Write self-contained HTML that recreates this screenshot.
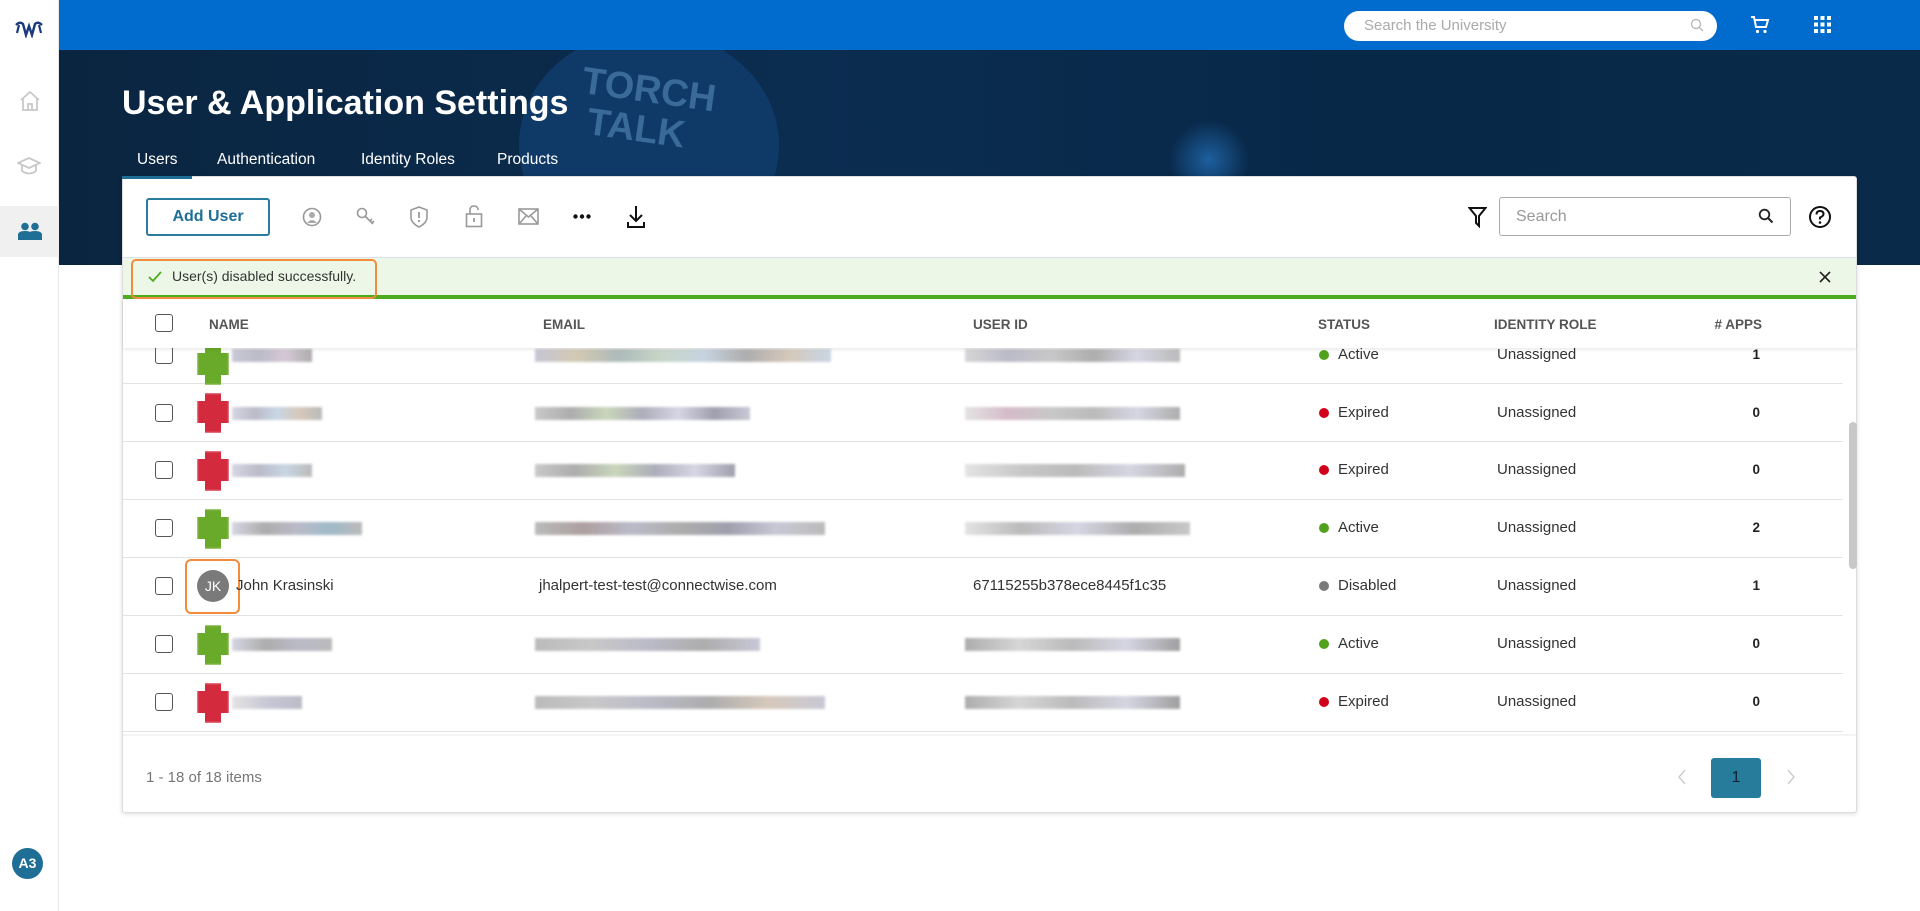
<!DOCTYPE html>
<html><head><meta charset="utf-8"><style>
*{box-sizing:border-box;margin:0;padding:0}
body{width:1920px;height:911px;overflow:hidden;background:#fff;font-family:"Liberation Sans",Arial,sans-serif;position:relative;color:#222}
.a{position:absolute}
.side{left:0;top:0;width:59px;height:911px;background:#fff;border-right:1px solid #e6e6e6;z-index:5}
.top{left:59px;top:0;right:0;height:50px;background:#016bce}
.ban{left:59px;top:50px;right:0;height:215px;background:radial-gradient(circle 40px at 1150px 110px,#1d5f9e,transparent),linear-gradient(90deg,#0a2540,#0b2d50 40%,#082848 70%,#0a2a4a);overflow:hidden}
.tab{top:151px;color:#fff;font-size:15.5px}
.card{left:122px;top:176px;width:1735px;height:637px;background:#fff;border:1px solid #ddd;border-radius:3px;box-shadow:0 1px 4px rgba(0,0,0,.15)}
.hd{font-size:13.5px;font-weight:bold;color:#555;top:317px}
.cb{width:18px;height:18px;border:1.5px solid #555;border-radius:3px;background:#fff;left:155px}
.sep{left:123px;width:1720px;height:1px;background:#e2e2e2}
.txt{font-size:15px;color:#333}
.dot{width:10px;height:10px;border-radius:50%}
.blur{height:13px;filter:blur(1.2px);opacity:.8}
.num{font-size:13.5px;font-weight:bold;color:#222;left:1740px;width:20px;text-align:right}
.ic{stroke:#999;fill:none;stroke-width:1.6}
</style></head><body>
<div class="a side">
 <svg class="a" style="left:14px;top:20px" width="30" height="18" viewBox="0 0 30 18"><path d="M2 5 Q6 1 9 4 L12 15 L15 6 L18 15 L21 4 Q24 1 28 5" fill="none" stroke="#1a3a7a" stroke-width="2.4"/><path d="M5 5 L3 13 M25 5 L27 13" stroke="#1a3a7a" stroke-width="2.2"/></svg>
 <svg class="a" style="left:19px;top:90px" width="22" height="22" viewBox="0 0 22 22"><path d="M2 10 L11 2 L20 10 M4 8 V20 H18 V8 M9 20 V14 H13 V20" fill="none" stroke="#c8c8c8" stroke-width="1.8"/></svg>
 <svg class="a" style="left:17px;top:156px" width="24" height="20" viewBox="0 0 24 20"><path d="M1 7 L12 2 L23 7 L12 12 Z M5 9 V15 Q12 20 19 15 V9" fill="none" stroke="#c8c8c8" stroke-width="1.8"/></svg>
 <div class="a" style="left:0;top:206px;width:59px;height:51px;background:#f0f0f0"></div>
 <svg class="a" style="left:18px;top:222px" width="24" height="18" viewBox="0 0 24 18"><circle cx="7" cy="4.5" r="3.8" fill="#1f6e96"/><circle cx="17" cy="4.5" r="3.8" fill="#1f6e96"/><path d="M0 18 V13 Q0 9 7 9 Q14 9 14 13 V18Z M10 18 V13 Q10 9 17 9 Q24 9 24 13 V18Z" fill="#1f6e96"/></svg>
 <div class="a" style="left:12px;top:848px;width:31px;height:31px;border-radius:50%;background:#1f6e96;color:#fff;font-size:14px;font-weight:bold;line-height:31px;text-align:center">A3</div>
</div>
<div class="a top"></div>
<div class="a" style="left:1344px;top:11px;width:373px;height:30px;background:#fff;border-radius:15px"></div>
<div class="a" style="left:1364px;top:17px;font-size:15px;color:#aaa">Search the University</div>
<svg class="a" style="left:1690px;top:18px" width="14" height="14" viewBox="0 0 14 14"><circle cx="6" cy="6" r="4.5" fill="none" stroke="#bbb" stroke-width="1.4"/><path d="M9.5 9.5 L13 13" stroke="#bbb" stroke-width="1.4"/></svg>
<svg class="a" style="left:1750px;top:15px" width="20" height="20" viewBox="0 0 20 20"><path d="M1 2 H4 L6 12 H16 L18 5 H5" fill="none" stroke="#fff" stroke-width="2"/><circle cx="7.5" cy="16.5" r="1.6" fill="#fff"/><circle cx="15" cy="16.5" r="1.6" fill="#fff"/></svg>
<svg class="a" style="left:1814px;top:16px" width="17" height="17" viewBox="0 0 17 17" fill="#fff"><rect x="0" y="0" width="4" height="4"/><rect x="6.5" y="0" width="4" height="4"/><rect x="13" y="0" width="4" height="4"/><rect x="0" y="6.5" width="4" height="4"/><rect x="6.5" y="6.5" width="4" height="4"/><rect x="13" y="6.5" width="4" height="4"/><rect x="0" y="13" width="4" height="4"/><rect x="6.5" y="13" width="4" height="4"/><rect x="13" y="13" width="4" height="4"/></svg>
<div class="a ban">
 <div class="a" style="left:460px;top:-20px;width:260px;height:230px;border-radius:50%;background:#0f3c6a;opacity:.9"></div>
 <div class="a" style="left:520px;top:20px;font-size:38px;font-weight:900;color:#3a6a98;line-height:40px;transform:rotate(8deg)">TORCH<br>&nbsp;TALK</div>
</div>
<div class="a" style="left:122px;top:84px;font-size:34px;font-weight:bold;color:#fff">User &amp; Application Settings</div>
<div class="a tab" style="left:137px">Users</div>
<div class="a tab" style="left:217px">Authentication</div>
<div class="a tab" style="left:361px">Identity Roles</div>
<div class="a tab" style="left:497px">Products</div>
<div class="a card"></div>
<div class="a" style="left:122px;top:176px;width:70px;height:3px;background:#1f6e96"></div>
<div class="a" style="left:146px;top:198px;width:124px;height:38px;border:2px solid #2a7ba0;border-radius:3px;color:#1f6e96;font-weight:bold;font-size:16px;text-align:center;line-height:34px">Add User</div>
<svg class="a" style="left:302px;top:207px" width="20" height="20" viewBox="0 0 20 20"><circle class="ic" cx="10" cy="10" r="8.5"/><circle cx="10" cy="8" r="3" fill="#aaa"/><path d="M5 16 Q10 10 15 16" fill="#aaa"/></svg>
<svg class="a" style="left:355px;top:206px" width="22" height="22" viewBox="0 0 22 22"><circle class="ic" cx="7" cy="7" r="4.5"/><path class="ic" d="M10 10 L18 18 M15 15 L17 13 M17 17 L19 15"/></svg>
<svg class="a" style="left:410px;top:206px" width="18" height="22" viewBox="0 0 18 22"><path class="ic" d="M9 1 L17 4 V11 Q17 17 9 21 Q1 17 1 11 V4 Z"/><path d="M9 6 V12" stroke="#999" stroke-width="1.8"/><circle cx="9" cy="15" r="1.1" fill="#999"/></svg>
<svg class="a" style="left:465px;top:205px" width="18" height="23" viewBox="0 0 18 23"><path class="ic" d="M5 9 V5 Q5 1 9 1 Q13 1 13 5"/><rect class="ic" x="1.5" y="9" width="15" height="12.5"/><path d="M9 13 V17" stroke="#999" stroke-width="1.8"/></svg>
<svg class="a" style="left:518px;top:208px" width="21" height="17" viewBox="0 0 21 17"><rect class="ic" x="1" y="1" width="19" height="15"/><path class="ic" d="M1 1 L10.5 9 L20 1 M1 16 L8 8 M20 16 L13 8"/></svg>
<svg class="a" style="left:573px;top:214px" width="18" height="5"><circle cx="2.5" cy="2.5" r="2.2" fill="#111"/><circle cx="9" cy="2.5" r="2.2" fill="#111"/><circle cx="15.5" cy="2.5" r="2.2" fill="#111"/></svg>
<svg class="a" style="left:626px;top:205px" width="20" height="24" viewBox="0 0 20 24"><path d="M10 1 V16 M4 10 L10 16 L16 10 M2 17 V22 H18 V17" fill="none" stroke="#111" stroke-width="2"/></svg>
<svg class="a" style="left:1468px;top:206px" width="19" height="22" viewBox="0 0 19 22"><path d="M1.5 2 H17.5 L11 10 V20 L8 17 V10 Z" fill="none" stroke="#111" stroke-width="2"/></svg>
<div class="a" style="left:1499px;top:197px;width:292px;height:39px;border:1.5px solid #aaa;border-radius:3px"></div>
<div class="a" style="left:1516px;top:208px;font-size:16px;color:#999">Search</div>
<svg class="a" style="left:1758px;top:208px" width="16" height="16" viewBox="0 0 16 16"><circle cx="6.5" cy="6.5" r="4.8" fill="none" stroke="#222" stroke-width="1.8"/><path d="M10 10 L14.5 14.5" stroke="#222" stroke-width="2"/></svg>
<svg class="a" style="left:1808px;top:205px" width="24" height="24" viewBox="0 0 24 24"><circle cx="12" cy="12" r="10" fill="none" stroke="#111" stroke-width="2"/><path d="M8.5 9.5 Q8.5 6 12 6 Q15.5 6 15.5 9 Q15.5 11 12 12.5 V14.5" fill="none" stroke="#111" stroke-width="2"/><circle cx="12" cy="17.5" r="1.3" fill="#111"/></svg>
<div class="a" style="left:123px;top:257px;width:1733px;height:39px;background:#edf7e7;border-top:1px solid #dde"></div>
<div class="a" style="left:123px;top:295px;width:1733px;height:4px;background:#4cab1e"></div>
<div class="a" style="left:131px;top:259px;width:246px;height:40px;border:2.5px solid #f08c3c;border-radius:5px"></div>
<svg class="a" style="left:148px;top:271px" width="14" height="12" viewBox="0 0 14 12"><path d="M1 6 L5 10 L13 1" fill="none" stroke="#4cab1e" stroke-width="1.8"/></svg>
<div class="a" style="left:172px;top:268px;font-size:14px;color:#333">User(s) disabled successfully.</div>
<svg class="a" style="left:1819px;top:271px" width="12" height="12"><path d="M1 1 L11 11 M11 1 L1 11" stroke="#222" stroke-width="1.6"/></svg>
<div class="a" style="left:123px;top:300px;width:1733px;height:48px;background:#fff;box-shadow:0 2px 3px rgba(0,0,0,.08);z-index:3"></div>
<div class="a cb" style="top:314px;z-index:4"></div>
<div class="a hd" style="left:209px;z-index:4">NAME</div>
<div class="a hd" style="left:543px;z-index:4">EMAIL</div>
<div class="a hd" style="left:973px;z-index:4">USER ID</div>
<div class="a hd" style="left:1318px;z-index:4">STATUS</div>
<div class="a hd" style="left:1494px;z-index:4">IDENTITY ROLE</div>
<div class="a hd" style="left:1708px;z-index:4;width:54px;text-align:right"># APPS</div>
<div class="a" style="left:1849px;top:422px;width:8px;height:147px;background:#c8c8c8;border-radius:4px"></div>

<div class="a sep" style="top:383px"></div><div class="a sep" style="top:441px"></div><div class="a sep" style="top:499px"></div><div class="a sep" style="top:557px"></div><div class="a sep" style="top:615px"></div><div class="a sep" style="top:673px"></div><div class="a sep" style="top:731px"></div>
<div class="a" style="left:123px;top:734px;width:1733px;height:2px;background:#f4f4f4"></div>

<div class="a cb" style="top:346px"></div>
<div class="a" style="left:197px;top:345px;width:32px;height:40px;background:#6aaa2a;filter:blur(1px);clip-path:polygon(25% 0,75% 0,75% 20%,100% 20%,100% 75%,75% 75%,75% 100%,25% 100%,25% 75%,0 75%,0 20%,25% 20%)"></div>
<div class="a blur" style="left:232px;top:349px;width:80px;background:linear-gradient(90deg,#bbc,#aab,#cbc,#999)"></div>
<div class="a blur" style="left:535px;top:349px;width:296px;background:linear-gradient(90deg,#b9b9c9,#c8bca0,#9aa,#bcb,#b9c9d9,#999,#cba,#bcd)"></div>
<div class="a blur" style="left:965px;top:349px;width:215px;background:linear-gradient(90deg,#ccc,#aab,#bbb,#999,#ccd,#aaa)"></div>
<div class="a dot" style="left:1319px;top:350px;background:#52a11d"></div><div class="a txt" style="left:1338px;top:346px">Active</div>
<div class="a txt" style="left:1497px;top:346px">Unassigned</div><div class="a num" style="top:347px">1</div>

<div class="a cb" style="top:404px"></div>
<div class="a" style="left:197px;top:393px;width:32px;height:40px;background:#d42a3e;filter:blur(1px);clip-path:polygon(25% 0,75% 0,75% 20%,100% 20%,100% 75%,75% 75%,75% 100%,25% 100%,25% 75%,0 75%,0 20%,25% 20%)"></div>
<div class="a blur" style="left:232px;top:407px;width:90px;background:linear-gradient(90deg,#ccd,#aab,#bcd,#cba,#aaa)"></div>
<div class="a blur" style="left:535px;top:407px;width:215px;background:linear-gradient(90deg,#bbb,#999,#bca,#99a,#ccd,#889,#bbc)"></div>
<div class="a blur" style="left:965px;top:407px;width:215px;background:linear-gradient(90deg,#ddd,#cab,#bbb,#aaa,#ccd,#999)"></div>
<div class="a dot" style="left:1319px;top:408px;background:#d0021b"></div><div class="a txt" style="left:1338px;top:404px">Expired</div>
<div class="a txt" style="left:1497px;top:404px">Unassigned</div><div class="a num" style="top:405px">0</div>

<div class="a cb" style="top:461px"></div>
<div class="a" style="left:197px;top:451px;width:32px;height:40px;background:#d42a3e;filter:blur(1px);clip-path:polygon(25% 0,75% 0,75% 20%,100% 20%,100% 75%,75% 75%,75% 100%,25% 100%,25% 75%,0 75%,0 20%,25% 20%)"></div>
<div class="a blur" style="left:232px;top:464px;width:80px;background:linear-gradient(90deg,#ccd,#aab,#bcd,#aaa)"></div>
<div class="a blur" style="left:535px;top:464px;width:200px;background:linear-gradient(90deg,#bbb,#999,#bca,#99a,#ccd,#889)"></div>
<div class="a blur" style="left:965px;top:464px;width:220px;background:linear-gradient(90deg,#ddd,#bbb,#aaa,#ccd,#999)"></div>
<div class="a dot" style="left:1319px;top:465px;background:#d0021b"></div><div class="a txt" style="left:1338px;top:461px">Expired</div>
<div class="a txt" style="left:1497px;top:461px">Unassigned</div><div class="a num" style="top:462px">0</div>

<div class="a cb" style="top:519px"></div>
<div class="a" style="left:197px;top:509px;width:32px;height:40px;background:#6aaa2a;filter:blur(1px);clip-path:polygon(25% 0,75% 0,75% 20%,100% 20%,100% 75%,75% 75%,75% 100%,25% 100%,25% 75%,0 75%,0 20%,25% 20%)"></div>
<div class="a blur" style="left:232px;top:522px;width:130px;background:linear-gradient(90deg,#ccd,#999,#aab,#8ab,#aaa)"></div>
<div class="a blur" style="left:535px;top:522px;width:290px;background:linear-gradient(90deg,#aaa,#988,#aab,#999,#889,#bbc,#aaa)"></div>
<div class="a blur" style="left:965px;top:522px;width:225px;background:linear-gradient(90deg,#ddd,#aaa,#ccd,#999,#bbb)"></div>
<div class="a dot" style="left:1319px;top:523px;background:#52a11d"></div><div class="a txt" style="left:1338px;top:519px">Active</div>
<div class="a txt" style="left:1497px;top:519px">Unassigned</div><div class="a num" style="top:520px">2</div>

<div class="a cb" style="top:577px"></div>
<div class="a" style="left:185px;top:559px;width:55px;height:55px;border:2.5px solid #f08c3c;border-radius:6px"></div>
<div class="a" style="left:197px;top:570px;width:32px;height:32px;border-radius:50%;background:#7a7a7a;color:#fff;font-size:14px;line-height:32px;text-align:center">JK</div>
<div class="a txt" style="left:236px;top:577px">John Krasinski</div>
<div class="a txt" style="left:539px;top:577px">jhalpert-test-test@connectwise.com</div>
<div class="a txt" style="left:973px;top:577px">67115255b378ece8445f1c35</div>
<div class="a dot" style="left:1319px;top:581px;background:#7a7a7a"></div><div class="a txt" style="left:1338px;top:577px">Disabled</div>
<div class="a txt" style="left:1497px;top:577px">Unassigned</div><div class="a num" style="top:578px">1</div>

<div class="a cb" style="top:635px"></div>
<div class="a" style="left:197px;top:625px;width:32px;height:40px;background:#6aaa2a;filter:blur(1px);clip-path:polygon(25% 0,75% 0,75% 20%,100% 20%,100% 75%,75% 75%,75% 100%,25% 100%,25% 75%,0 75%,0 20%,25% 20%)"></div>
<div class="a blur" style="left:232px;top:638px;width:100px;background:linear-gradient(90deg,#ccd,#999,#aab,#aaa)"></div>
<div class="a blur" style="left:535px;top:638px;width:225px;background:linear-gradient(90deg,#aaa,#bbb,#aab,#999,#bbc)"></div>
<div class="a blur" style="left:965px;top:638px;width:215px;background:linear-gradient(90deg,#999,#ccc,#aaa,#ccd,#888)"></div>
<div class="a dot" style="left:1319px;top:639px;background:#52a11d"></div><div class="a txt" style="left:1338px;top:635px">Active</div>
<div class="a txt" style="left:1497px;top:635px">Unassigned</div><div class="a num" style="top:636px">0</div>

<div class="a cb" style="top:693px"></div>
<div class="a" style="left:197px;top:683px;width:32px;height:40px;background:#d42a3e;filter:blur(1px);clip-path:polygon(25% 0,75% 0,75% 20%,100% 20%,100% 75%,75% 75%,75% 100%,25% 100%,25% 75%,0 75%,0 20%,25% 20%)"></div>
<div class="a blur" style="left:232px;top:696px;width:70px;background:linear-gradient(90deg,#ddd,#bbc,#aab)"></div>
<div class="a blur" style="left:535px;top:696px;width:290px;background:linear-gradient(90deg,#aaa,#bbb,#aab,#999,#cba,#bbc)"></div>
<div class="a blur" style="left:965px;top:696px;width:215px;background:linear-gradient(90deg,#999,#ccc,#aaa,#ccd,#888)"></div>
<div class="a dot" style="left:1319px;top:697px;background:#d0021b"></div><div class="a txt" style="left:1338px;top:693px">Expired</div>
<div class="a txt" style="left:1497px;top:693px">Unassigned</div><div class="a num" style="top:694px">0</div>

<div class="a" style="left:146px;top:769px;font-size:15px;color:#777">1 - 18 of 18 items</div>
<svg class="a" style="left:1677px;top:769px" width="10" height="16"><path d="M8 1 L2 8 L8 15" fill="none" stroke="#ccc" stroke-width="1.4"/></svg>
<div class="a" style="left:1711px;top:758px;width:50px;height:40px;background:#277c9c;border-radius:3px;color:#123;font-size:16px;text-align:center;line-height:40px">1</div>
<svg class="a" style="left:1786px;top:769px" width="10" height="16"><path d="M2 1 L8 8 L2 15" fill="none" stroke="#ccc" stroke-width="1.4"/></svg>
</body></html>
